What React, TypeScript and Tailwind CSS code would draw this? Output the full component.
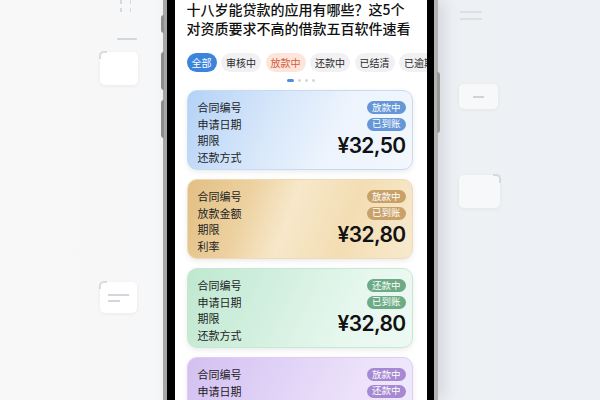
import React from "react";

type Loan = {
  labels: string[];
  badges: string[];
  amount: string;
  card: string;
  badge: string;
};

const TABS = ["全部", "审核中", "放款中", "还款中", "已结清", "已逾期"];

const LOANS: Loan[] = [
  {
    labels: ["合同编号", "申请日期", "期限", "还款方式"],
    badges: ["放款中", "已到账"],
    amount: "¥32,50",
    card: "border-[#c6daf2] bg-[linear-gradient(115deg,#b4d2f6_0%,#d6e6fa_35%,#edf4fd_65%,#f3f7fd_100%)]",
    badge: "bg-[#6597d8]",
  },
  {
    labels: ["合同编号", "放款金额", "期限", "利率"],
    badges: ["放款中", "已到账"],
    amount: "¥32,80",
    card: "border-[#eedbb6] bg-[linear-gradient(110deg,#e2bf84_0%,#ecd09e_25%,#f7e8ca_45%,#f3ddb3_70%,#f8eacf_100%)]",
    badge: "bg-[#c9a168]",
  },
  {
    labels: ["合同编号", "申请日期", "期限", "还款方式"],
    badges: ["还款中", "已到账"],
    amount: "¥32,80",
    card: "border-[#c8e8d6] bg-[linear-gradient(115deg,#bfe8d0_0%,#d4f0e0_40%,#e6f7ee_70%,#eef9f3_100%)]",
    badge: "bg-[#6cab86]",
  },
  {
    labels: ["合同编号", "申请日期", "期限", "还款方式"],
    badges: ["放款中", "还款中"],
    amount: "¥32,80",
    card: "border-[#dccff3] bg-[linear-gradient(115deg,#d3c0f1_0%,#e1d3f7_40%,#ece2fa_70%,#f1eafc_100%)]",
    badge: "bg-[#a689d2]",
  },
];

function LoanCard({ loan }: { loan: Loan }) {
  return (
    <div className={`flex h-[80px] shrink-0 justify-between rounded-[10px] border pl-[10px] pr-[6px] shadow-[0_2px_5px_rgba(80,90,110,0.12)] ${loan.card}`}>
      <div className="pt-[8px] text-[11px] leading-[16.5px] text-[#1d1d1f]">
        {loan.labels.map((label) => (
          <div key={label}>{label}</div>
        ))}
      </div>
      <div className="flex flex-col items-end pt-[10px]">
        {loan.badges.map((badge) => (
          <span key={badge} className={`mb-[3.5px] flex h-[13px] items-center rounded-full px-[5px] text-[9.5px] leading-none text-white ${loan.badge}`}>
            {badge}
          </span>
        ))}
        <span className="mt-[-1px] font-['Inter','Noto_Sans',sans-serif] text-[21px] font-semibold leading-[26px] tracking-[-0.03em] text-[#111]">
          {loan.amount}
        </span>
      </div>
    </div>
  );
}

function Decor() {
  return (
    <>
      <div className="absolute left-[120px] top-0 flex gap-[8px]">
        <div className="flex flex-col gap-[4px]">
          <span className="h-[4px] w-[1.5px] bg-[#d6d8dc]" />
          <span className="h-[4px] w-[1.5px] bg-[#d6d8dc]" />
        </div>
        <div className="flex flex-col gap-[4px]">
          <span className="h-[4px] w-[1.5px] bg-[#d6d8dc]" />
          <span className="h-[4px] w-[1.5px] bg-[#d6d8dc]" />
        </div>
      </div>
      <div className="absolute left-[117px] top-[38px] h-[2px] w-[20px] rounded bg-[#d3d6da]" />
      <div className="absolute left-[100px] top-[52px] h-[33px] w-[38px] rounded-[5px] bg-white shadow-[0_1px_4px_rgba(0,0,0,0.06)]">
        <div className="absolute -left-px -top-px h-[8px] w-[8px] rounded-tl-[5px] border-l-2 border-t-2 border-[#dadce0]" />
      </div>
      <div className="absolute left-[100px] top-[282px] h-[31px] w-[37px] rounded-[5px] bg-white shadow-[0_1px_4px_rgba(0,0,0,0.06)]">
        <div className="absolute -left-px -top-px h-[8px] w-[8px] rounded-tl-[5px] border-l-2 border-t-2 border-[#dadce0]" />
        <div className="absolute left-[8px] top-[12px] h-[1.5px] w-[21px] bg-[#d3d6da]" />
        <div className="absolute left-[8px] top-[18px] h-[1.5px] w-[12px] bg-[#d3d6da]" />
      </div>
      <div className="absolute left-[460px] top-[11px] h-[1.5px] w-[22px] bg-[#dcdfe3]" />
      <div className="absolute left-[460px] top-[18px] h-[1.5px] w-[22px] bg-[#dcdfe3]" />
      <div className="absolute left-[459px] top-[84px] h-[25px] w-[39px] rounded-[5px] bg-[#f7f8fa] shadow-[0_1px_4px_rgba(0,0,0,0.05)]">
        <div className="absolute left-[14px] top-[12px] h-[1.5px] w-[11px] bg-[#cfd2d7]" />
      </div>
      <div className="absolute left-[459px] top-[175px] h-[33px] w-[41px] rounded-[5px] bg-[#f7f8fa] shadow-[0_1px_4px_rgba(0,0,0,0.05)]">
        <div className="absolute -right-px -top-px h-[9px] w-[8px] rounded-tr-[5px] border-r-2 border-t-2 border-[#d6d9dd]" />
      </div>
    </>
  );
}

export default function App() {
  return (
    <div className="relative flex h-[400px] w-[600px] justify-center overflow-hidden bg-[linear-gradient(90deg,#f8f8f9_0%,#f5f6f7_45%,#eef1f4_75%,#edf0f4_100%)] font-['Noto_Sans_CJK_SC','Noto_Sans',sans-serif]">
      <Decor />
      <div className="relative h-full w-[275px] border-x-[4px] border-l-[#a8a6a4] border-r-[#b4b2b0] bg-black pl-[8px] pr-[7px] shadow-[6px_0_14px_rgba(90,100,120,0.18)]">
        <span className="absolute left-[-6px] top-[15px] h-[18px] w-[3px] rounded-l bg-[#8f8d8b]" />
        <span className="absolute left-[-6px] top-[52px] h-[38px] w-[3px] rounded-l bg-[#8f8d8b]" />
        <span className="absolute left-[-6px] top-[100px] h-[38px] w-[3px] rounded-l bg-[#8f8d8b]" />
        <span className="absolute right-[-6px] top-[72px] h-[61px] w-[3px] rounded-r bg-[#9a9896]" />
        <div className="flex h-full w-full flex-col overflow-hidden bg-white">
          <h1 className="px-3 text-[14px] font-medium leading-[19px] text-[#111]">
            十八岁能贷款的应用有哪些？这5个对资质要求不高的借款五百软件速看
          </h1>
          <div className="mt-[15px] flex gap-[4.5px] whitespace-nowrap pl-3">
            {TABS.map((tab, i) => (
              <span
                key={tab}
                className={`flex h-[19px] shrink-0 items-center rounded-full px-[5px] text-[10px] ${
                  i === 0 ? "bg-[#3d84dd] text-white" : i === 2 ? "bg-[#fde5dc] text-[#d35d3c]" : "bg-[#f1f1f3] text-[#2a2a2a]"
                }`}
              >
                {tab}
              </span>
            ))}
          </div>
          <div className="mt-[7px] flex items-center justify-center gap-[4px]">
            <span className="h-[3px] w-[7px] rounded-full bg-[#4a8ee0]" />
            <span className="h-[3px] w-[3px] rounded-full bg-[#d4d6da]" />
            <span className="h-[3px] w-[3px] rounded-full bg-[#d4d6da]" />
            <span className="h-[3px] w-[3px] rounded-full bg-[#d4d6da]" />
          </div>
          <div className="mt-[8px] flex flex-col gap-[9px] pl-3 pr-[14px]">
            {LOANS.map((loan, i) => (
              <LoanCard key={i} loan={loan} />
            ))}
          </div>
        </div>
      </div>
    </div>
  );
}
